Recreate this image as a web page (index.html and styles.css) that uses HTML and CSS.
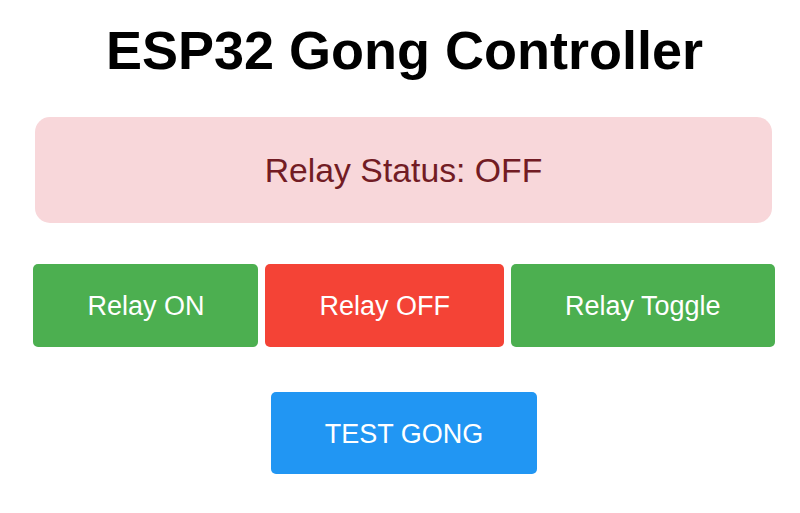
FILE: index.html
```html
<!DOCTYPE html>
<html lang="en">
<head>
    <meta charset="UTF-8">
    <meta name="viewport" content="width=device-width, initial-scale=1.0">
    <title>ESP32 Gong Controller</title>
    <link rel="stylesheet" href="styles.css">
</head>
<body>
    <div class="page">
        <h1>ESP32 Gong Controller</h1>
        <div class="status" id="status">Relay Status: OFF</div>
        <div class="controls">
            <button class="btn btn-on">Relay ON</button>
            <button class="btn btn-off">Relay OFF</button>
            <button class="btn btn-on">Relay Toggle</button>
        </div>
        <div class="test">
            <button class="btn btn-test">TEST GONG</button>
        </div>
    </div>
</body>
</html>
```

FILE: styles.css
```css
body {
    font-family: "Liberation Sans", Arial, sans-serif;
    margin: 0;
    padding: 0;
    background-color: #ffffff;
}

.page {
    padding-left: 8px;
    text-align: center;
}

h1 {
    font-size: 54px;
    font-weight: bold;
    color: #000;
    margin: 0 0 0 1px;
    padding-top: 19px;
    line-height: 62px;
}

.status {
    width: 737px;
    margin: 36px 0 0 27px;
    padding: 33px 0;
    box-sizing: border-box;
    height: 106px;
    font-size: 33.75px;
    line-height: 40px;
    background-color: #f8d7da;
    color: #721c24;
    border-radius: 15px;
}

.controls {
    display: flex;
    justify-content: center;
    gap: 7px;
    margin-top: 41px;
}

.test {
    margin-top: 45px;
    display: flex;
    justify-content: center;
}

.btn {
    font-family: "Liberation Sans", Arial, sans-serif;
    font-size: 27px;
    color: #fff;
    border: none;
    border-radius: 5px;
    height: 83px;
    padding: 2px 54px 0;
    cursor: pointer;
}

.btn-on {
    background-color: #4CAF50;
}

.btn-off {
    background-color: #f44336;
}

.btn-test {
    background-color: #2196F3;
    height: 82px;
}
```
